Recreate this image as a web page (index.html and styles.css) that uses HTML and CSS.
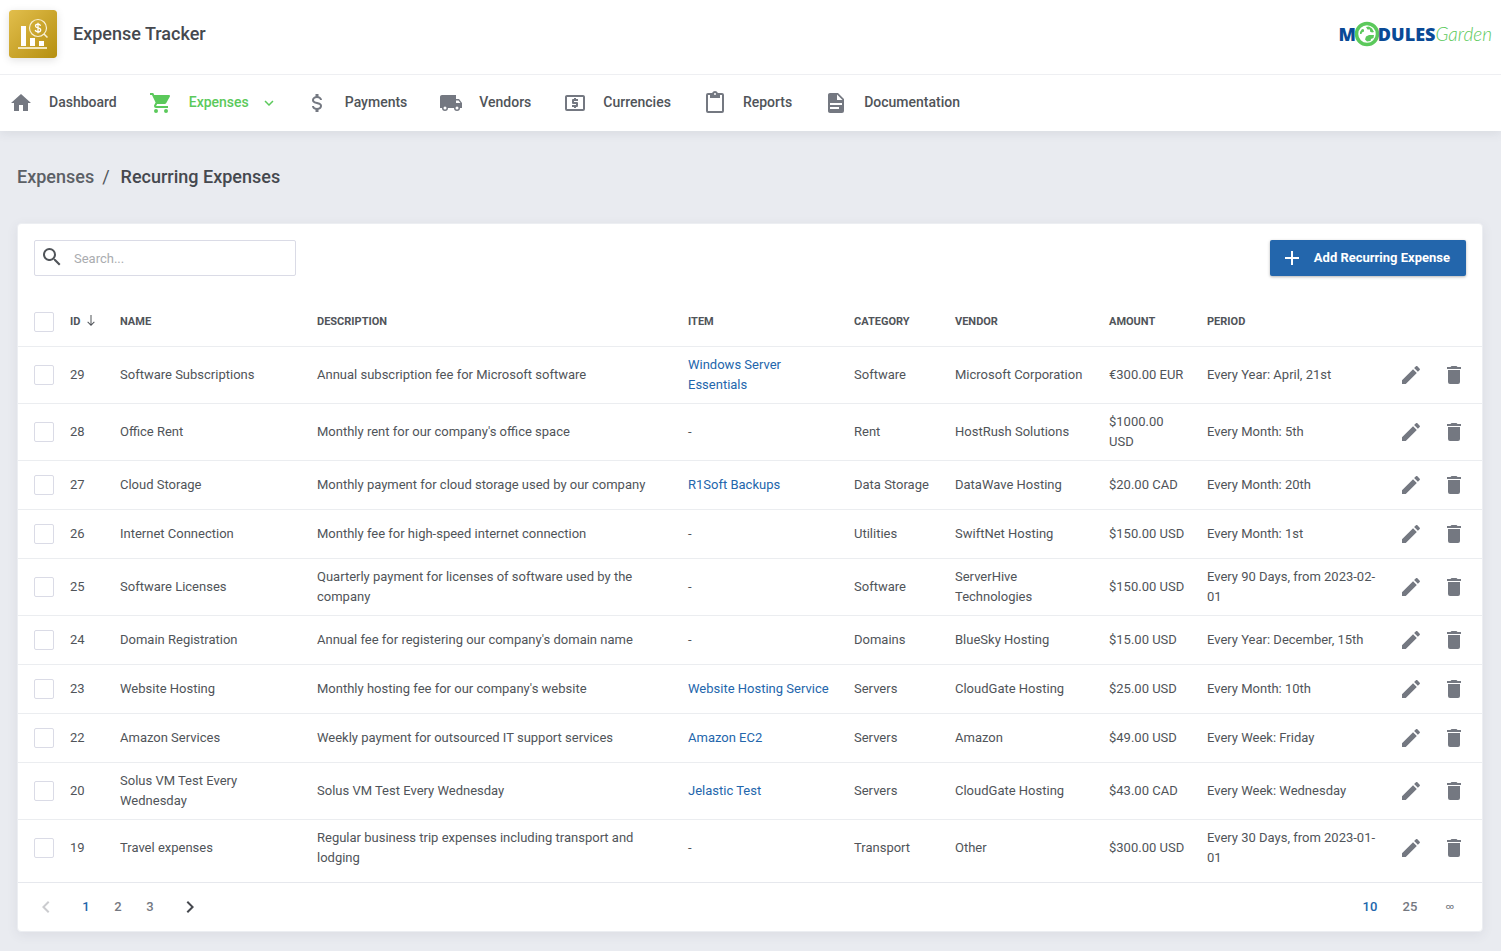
FILE: index.html
```
<!DOCTYPE html>
<html lang="en">
<head>
  <meta charset="utf-8">
  <title>Expense Tracker</title>
  <link rel="stylesheet" href="styles.css">
</head>
<body>
<svg class="sprite" aria-hidden="true">
  <symbol id="home" viewBox="0 0 24 24"><path d="M10 20V14H14V20H19V12H22L12 3L2 12H5V20H10Z"/></symbol>
  <symbol id="cart" viewBox="0 0 24 24"><path d="M17 18A2 2 0 1 1 17 22A2 2 0 1 1 17 18M1 2H4.27L5.21 4H20A1 1 0 0 1 21 5C21 5.17 20.95 5.34 20.88 5.5L17.3 11.97C16.96 12.58 16.3 13 15.55 13H8.1L7.2 14.63L7.17 14.75A.25 .25 0 0 0 7.42 15H19V17H7A2 2 0 0 1 5 15C5 14.65 5.09 14.32 5.24 14.04L6.6 11.59L3 4H1V2M7 18A2 2 0 1 1 7 22A2 2 0 1 1 7 18Z"/></symbol>
  <symbol id="usd" viewBox="0 0 24 24"><path d="M7 15H9C9 16.08 10.37 17 12 17S15 16.08 15 15C15 13.9 13.96 13.5 11.76 12.97C9.64 12.44 7 11.78 7 9C7 7.21 8.47 5.69 10.5 5.18V3H13.5V5.18C15.53 5.69 17 7.21 17 9H15C15 7.92 13.63 7 12 7S9 7.92 9 9C9 10.1 10.04 10.5 12.24 11.03C14.36 11.56 17 12.22 17 15C17 16.79 15.53 18.31 13.5 18.82V21H10.5V18.82C8.47 18.31 7 16.79 7 15Z"/></symbol>
  <symbol id="truck" viewBox="0 0 24 24"><path d="M18 18.5A1.5 1.5 0 0 0 19.5 17A1.5 1.5 0 0 0 18 15.5A1.5 1.5 0 0 0 16.5 17A1.5 1.5 0 0 0 18 18.5M19.5 9.5H17V12H21.46L19.5 9.5M6 18.5A1.5 1.5 0 0 0 7.5 17A1.5 1.5 0 0 0 6 15.5A1.5 1.5 0 0 0 4.5 17A1.5 1.5 0 0 0 6 18.5M20 8L23 12V17H21A3 3 0 0 1 15 17H9A3 3 0 0 1 3 17H1V6C1 4.89 1.89 4 3 4H17V8H20Z"/></symbol>
  <symbol id="cash" viewBox="0 0 24 24"><path d="M20 18H4V6H20M20 4H4C2.89 4 2 4.89 2 6V18A2 2 0 0 0 4 20H20A2 2 0 0 0 22 18V6C22 4.89 21.1 4 20 4M11 17H13V16H14A1 1 0 0 0 15 15V12A1 1 0 0 0 14 11H11V10H15V8H13V7H11V8H10A1 1 0 0 0 9 9V12A1 1 0 0 0 10 13H13V14H9V16H11V17Z"/></symbol>
  <symbol id="clipboard" viewBox="0 0 24 24"><path d="M19 2H14.82C14.4 .84 13.3 0 12 0S9.6 .84 9.18 2H5A2 2 0 0 0 3 4V20A2 2 0 0 0 5 22H19A2 2 0 0 0 21 20V4A2 2 0 0 0 19 2M12 2A1 1 0 1 1 12 4A1 1 0 1 1 12 2M7 4V7H17V4H19V20H5V4H7Z"/></symbol>
  <symbol id="file" viewBox="0 0 24 24"><path d="M13 9H18.5L13 3.5V9M6 2H14L20 8V20A2 2 0 0 1 18 22H6C4.89 22 4 21.1 4 20V4C4 2.89 4.89 2 6 2M15 18V16H6V18H15M18 14V12H6V14H18Z"/></symbol>
  <symbol id="search" viewBox="0 0 24 24"><path d="M9.5 3A6.5 6.5 0 0 1 16 9.5C16 11.11 15.41 12.59 14.44 13.73L14.71 14H15.5L20.5 19L19 20.5L14 15.5V14.71L13.73 14.44A6.5 6.5 0 1 1 9.5 3M9.5 5A4.5 4.5 0 1 0 9.5 14A4.5 4.5 0 1 0 9.5 5Z"/></symbol>
  <symbol id="plus" viewBox="0 0 24 24"><path d="M19 13H13V19H11V13H5V11H11V5H13V11H19V13Z"/></symbol>
  <symbol id="down" viewBox="0 0 24 24"><path d="M7.41 8.58L12 13.17L16.59 8.58L18 10L12 16L6 10L7.41 8.58Z"/></symbol>
  <symbol id="left" viewBox="0 0 24 24"><path d="M15.41 16.58L10.83 12L15.41 7.41L14 6L8 12L14 18L15.41 16.58Z"/></symbol>
  <symbol id="right" viewBox="0 0 24 24"><path d="M8.59 16.58L13.17 12L8.59 7.41L10 6L16 12L10 18L8.59 16.58Z"/></symbol>
  <symbol id="sort" viewBox="0 0 12 12"><path d="M5.5 0H6.5V9L9 6.5L9.7 7.2L6 11L2.3 7.2L3 6.5L5.5 9Z"/></symbol>
  <symbol id="pencil" viewBox="0 0 24 24"><path d="M20.71 7.04C21.1 6.65 21.1 6 20.71 5.63L18.37 3.29C18 2.9 17.35 2.9 16.96 3.29L15.12 5.12L18.87 8.87M3 17.25V21H6.75L17.81 9.93L14.06 6.18L3 17.25Z"/></symbol>
  <symbol id="trash" viewBox="0 0 24 24"><path d="M19 4H15.5L14.5 3H9.5L8.5 4H5V6H19M6 19A2 2 0 0 0 8 21H16A2 2 0 0 0 18 19V7H6V19Z"/></symbol>
</svg>

<header>
  <div class="top">
    <svg class="app-icon" viewBox="0 0 48 48">
      <defs>
        <linearGradient id="gold" x1="0" y1="0" x2="1" y2="1">
          <stop offset="0" stop-color="#e2be4c"/>
          <stop offset="1" stop-color="#b58f10"/>
        </linearGradient>
      </defs>
      <rect width="48" height="48" rx="3" fill="url(#gold)"/>
      <path d="M12 16H17V36H12ZM21 28H26V36H21ZM30 31H35V36H30Z" fill="#fff"/>
      <path d="M9 37H38V39H9Z" fill="#f3e7bd"/>
      <circle cx="29" cy="18" r="8.5" fill="none" stroke="#f8f0d5" stroke-width="1.2"/>
      <path d="M35 24L38.500 27.500" stroke="#f8f0d5" stroke-width="1.500"/>
      <path d="M31.500 15.800C31.200 14.700 30.200 14.200 29 14.200C27.500 14.200 26.500 14.900 26.500 16C26.500 18.600 31.700 17 31.700 19.900C31.700 21.100 30.500 21.800 29 21.800C27.500 21.800 26.500 21.200 26.200 20M29 12.800V23.200" fill="none" stroke="#fff" stroke-width="1.300"/>
    </svg>
    <h1>Expense Tracker</h1>
    <a class="brand" href="#" aria-label="ModulesGarden"><b>M</b><svg class="globe" viewBox="0 0 26 26">
        <circle cx="13" cy="13" r="10.500" fill="#fff" stroke="#5bc95b" stroke-width="3.500"/>
        <path d="M6 11L8 8L10 8.500L10 10.500L8 11.500L7.500 13L6 13ZM12 6L15 5.500L18 7.500L20 11L18 11.500L16 10.500L16 8.500L13.500 8.500ZM11 18.500L12 15.500L15 14L20 14L19.500 17L17 18L16.500 20L13 20.500Z" fill="#5bc95b"/>
      </svg><b>DULES</b><i>Garden</i></a>
  </div>
  <nav>
    <a href="#"><svg><use href="#home"/></svg>Dashboard</a>
    <a href="#" class="active"><svg><use href="#cart"/></svg>Expenses<svg class="caret"><use href="#down"/></svg></a>
    <a href="#"><svg><use href="#usd"/></svg>Payments</a>
    <a href="#"><svg><use href="#truck"/></svg>Vendors</a>
    <a href="#"><svg><use href="#cash"/></svg>Currencies</a>
    <a href="#"><svg><use href="#clipboard"/></svg>Reports</a>
    <a href="#"><svg><use href="#file"/></svg>Documentation</a>
  </nav>
</header>

<main>
  <div class="breadcrumb"><a href="#">Expenses</a><span>/</span><h2>Recurring Expenses</h2></div>

  <div class="card">
    <div class="toolbar">
      <label class="search">
        <svg><use href="#search"/></svg>
        <input type="text" placeholder="Search..." aria-label="Search">
      </label>
      <button class="add" type="button"><svg><use href="#plus"/></svg>Add Recurring Expense</button>
    </div>

    <table>
      <colgroup>
        <col class="c-check"><col class="c-id"><col class="c-name"><col><col class="c-item">
        <col class="c-category"><col class="c-vendor"><col class="c-amount"><col class="c-period"><col class="c-actions">
      </colgroup>
      <thead>
        <tr>
          <th><input type="checkbox" aria-label="Select all"></th>
          <th>ID<svg class="sort"><use href="#sort"/></svg></th>
          <th>NAME</th>
          <th>DESCRIPTION</th>
          <th>ITEM</th>
          <th>CATEGORY</th>
          <th>VENDOR</th>
          <th>AMOUNT</th>
          <th>PERIOD</th>
          <th></th>
        </tr>
      </thead>
      <tbody>
        <tr>
          <td><input type="checkbox" aria-label="Select 29"></td>
          <td>29</td>
          <td>Software Subscriptions</td>
          <td>Annual subscription fee for Microsoft software</td>
          <td><a href="#">Windows Server Essentials</a></td>
          <td>Software</td>
          <td>Microsoft Corporation</td>
          <td>€300.00 EUR</td>
          <td>Every Year: April, 21st</td>
          <td><div class="actions"><button type="button" aria-label="Edit"><svg><use href="#pencil"/></svg></button><button type="button" aria-label="Delete"><svg><use href="#trash"/></svg></button></div></td>
        </tr>
        <tr>
          <td><input type="checkbox" aria-label="Select 28"></td>
          <td>28</td>
          <td>Office Rent</td>
          <td>Monthly rent for our company's office space</td>
          <td>-</td>
          <td>Rent</td>
          <td>HostRush Solutions</td>
          <td>$1000.00 USD</td>
          <td>Every Month: 5th</td>
          <td><div class="actions"><button type="button" aria-label="Edit"><svg><use href="#pencil"/></svg></button><button type="button" aria-label="Delete"><svg><use href="#trash"/></svg></button></div></td>
        </tr>
        <tr>
          <td><input type="checkbox" aria-label="Select 27"></td>
          <td>27</td>
          <td>Cloud Storage</td>
          <td>Monthly payment for cloud storage used by our company</td>
          <td><a href="#">R1Soft Backups</a></td>
          <td>Data Storage</td>
          <td>DataWave Hosting</td>
          <td>$20.00 CAD</td>
          <td>Every Month: 20th</td>
          <td><div class="actions"><button type="button" aria-label="Edit"><svg><use href="#pencil"/></svg></button><button type="button" aria-label="Delete"><svg><use href="#trash"/></svg></button></div></td>
        </tr>
        <tr>
          <td><input type="checkbox" aria-label="Select 26"></td>
          <td>26</td>
          <td>Internet Connection</td>
          <td>Monthly fee for high-speed internet connection</td>
          <td>-</td>
          <td>Utilities</td>
          <td>SwiftNet Hosting</td>
          <td>$150.00 USD</td>
          <td>Every Month: 1st</td>
          <td><div class="actions"><button type="button" aria-label="Edit"><svg><use href="#pencil"/></svg></button><button type="button" aria-label="Delete"><svg><use href="#trash"/></svg></button></div></td>
        </tr>
        <tr>
          <td><input type="checkbox" aria-label="Select 25"></td>
          <td>25</td>
          <td>Software Licenses</td>
          <td>Quarterly payment for licenses of software used by the company</td>
          <td>-</td>
          <td>Software</td>
          <td>ServerHive Technologies</td>
          <td>$150.00 USD</td>
          <td>Every 90 Days, from 2023-02-01</td>
          <td><div class="actions"><button type="button" aria-label="Edit"><svg><use href="#pencil"/></svg></button><button type="button" aria-label="Delete"><svg><use href="#trash"/></svg></button></div></td>
        </tr>
        <tr>
          <td><input type="checkbox" aria-label="Select 24"></td>
          <td>24</td>
          <td>Domain Registration</td>
          <td>Annual fee for registering our company's domain name</td>
          <td>-</td>
          <td>Domains</td>
          <td>BlueSky Hosting</td>
          <td>$15.00 USD</td>
          <td>Every Year: December, 15th</td>
          <td><div class="actions"><button type="button" aria-label="Edit"><svg><use href="#pencil"/></svg></button><button type="button" aria-label="Delete"><svg><use href="#trash"/></svg></button></div></td>
        </tr>
        <tr>
          <td><input type="checkbox" aria-label="Select 23"></td>
          <td>23</td>
          <td>Website Hosting</td>
          <td>Monthly hosting fee for our company's website</td>
          <td><a href="#">Website Hosting Service</a></td>
          <td>Servers</td>
          <td>CloudGate Hosting</td>
          <td>$25.00 USD</td>
          <td>Every Month: 10th</td>
          <td><div class="actions"><button type="button" aria-label="Edit"><svg><use href="#pencil"/></svg></button><button type="button" aria-label="Delete"><svg><use href="#trash"/></svg></button></div></td>
        </tr>
        <tr>
          <td><input type="checkbox" aria-label="Select 22"></td>
          <td>22</td>
          <td>Amazon Services</td>
          <td>Weekly payment for outsourced IT support services</td>
          <td><a href="#">Amazon EC2</a></td>
          <td>Servers</td>
          <td>Amazon</td>
          <td>$49.00 USD</td>
          <td>Every Week: Friday</td>
          <td><div class="actions"><button type="button" aria-label="Edit"><svg><use href="#pencil"/></svg></button><button type="button" aria-label="Delete"><svg><use href="#trash"/></svg></button></div></td>
        </tr>
        <tr>
          <td><input type="checkbox" aria-label="Select 20"></td>
          <td>20</td>
          <td>Solus VM Test Every Wednesday</td>
          <td>Solus VM Test Every Wednesday</td>
          <td><a href="#">Jelastic Test</a></td>
          <td>Servers</td>
          <td>CloudGate Hosting</td>
          <td>$43.00 CAD</td>
          <td>Every Week: Wednesday</td>
          <td><div class="actions"><button type="button" aria-label="Edit"><svg><use href="#pencil"/></svg></button><button type="button" aria-label="Delete"><svg><use href="#trash"/></svg></button></div></td>
        </tr>
        <tr>
          <td><input type="checkbox" aria-label="Select 19"></td>
          <td>19</td>
          <td>Travel expenses</td>
          <td>Regular business trip expenses including transport and lodging</td>
          <td>-</td>
          <td>Transport</td>
          <td>Other</td>
          <td>$300.00 USD</td>
          <td>Every 30 Days, from 2023-01-01</td>
          <td><div class="actions"><button type="button" aria-label="Edit"><svg><use href="#pencil"/></svg></button><button type="button" aria-label="Delete"><svg><use href="#trash"/></svg></button></div></td>
        </tr>
      </tbody>
    </table>

    <div class="footer">
      <div class="pages">
        <button type="button" class="prev" aria-label="Previous" disabled><svg><use href="#left"/></svg></button>
        <button type="button" class="current">1</button>
        <button type="button">2</button>
        <button type="button">3</button>
        <button type="button" class="next" aria-label="Next"><svg><use href="#right"/></svg></button>
      </div>
      <div class="sizes">
        <button type="button" class="current">10</button>
        <button type="button">25</button>
        <button type="button" class="all">∞</button>
      </div>
    </div>
  </div>
</main>
</body>
</html>
```
FILE: styles.css
```
* {
  box-sizing: border-box;
}
body {
  margin: 0;
  background: #e9ebf0;
  color: #505459;
  font-family: Roboto, sans-serif;
  font-size: 13px;
  line-height: 20px;
}
svg {
  display: block;
  width: 24px;
  height: 24px;
  fill: currentColor;
  flex: none;
}
.sprite {
  display: none;
}
a {
  color: #2366ac;
  text-decoration: none;
}
button {
  border: none;
  background: none;
  padding: 0;
  font: inherit;
  color: inherit;
  cursor: pointer;
}

/* header */
header {
  background: #fff;
  box-shadow: 0 2px 10px rgba(60, 65, 90, 0.1);
}
.top {
  display: flex;
  align-items: center;
  height: 75px;
  padding: 0 9px 6px;
  border-bottom: 1px solid #eeeff2;
}
.app-icon {
  width: 48px;
  height: 48px;
  border-radius: 3px;
  box-shadow: 0 2px 8px rgba(0, 0, 0, 0.12);
}
h1 {
  margin: 0 0 0 16px;
  font-size: 18px;
  font-weight: 500;
  color: #45484e;
}
.brand {
  display: flex;
  align-items: center;
  margin-left: auto;
  font-family: "Open Sans", sans-serif;
  font-size: 18px;
  color: #0a4a96;
}
.brand b {
  font-weight: 800;
}
.brand i {
  font-family: Lato, sans-serif;
  font-size: 19px;
  font-weight: 300;
  color: #5bc95b;
}
.globe {
  width: 26px;
  height: 26px;
  margin: 0 -2px;
}
nav {
  display: flex;
  gap: 32px;
  height: 56px;
  padding: 0 9px 2px;
}
nav a {
  display: flex;
  align-items: center;
  gap: 16px;
  font-size: 14px;
  font-weight: 500;
  color: #505459;
}
nav svg {
  margin-top: 2px;
  color: #747881;
}
nav .active, nav .active svg {
  color: #5bc95b;
}
nav .caret {
  width: 18px;
  height: 18px;
  margin: 2px -5px 0 -5px;
}

main {
  padding: 34px 18px 18px 17px;
}
.breadcrumb {
  display: flex;
  align-items: center;
  height: 24px;
  margin-bottom: 34px;
  font-size: 18px;
}
.breadcrumb a {
  font-weight: 500;
  color: #5c6066;
}
.breadcrumb span {
  margin: 0 11px 0 8px;
}
h2 {
  margin: 0;
  font-size: 18px;
  font-weight: 500;
  color: #45484e;
}

.card {
  background: #fff;
  border: 1px solid #eceef2;
  border-radius: 4px;
  box-shadow: 0 3px 12px rgba(60, 65, 90, 0.08);
}
.toolbar {
  display: flex;
  justify-content: space-between;
  padding: 16px 16px 20px;
}
.search {
  display: flex;
  align-items: center;
  width: 262px;
  height: 36px;
  padding-left: 5px;
  border: 1px solid #dadbe6;
  border-radius: 2px;
}
.search svg {
  margin-bottom: 2px;
}
.search input {
  flex: 1;
  min-width: 0;
  margin-left: 10px;
  padding: 2px 0 0;
  border: none;
  outline: none;
  font: inherit;
}
.search input::placeholder {
  color: #aaacb0;
}
.add {
  display: flex;
  align-items: center;
  gap: 10px;
  height: 36px;
  padding: 0 16px 0 10px;
  border-radius: 2px;
  background: #2366ac;
  box-shadow: 0 1px 3px rgba(0, 0, 0, 0.3);
  color: #fff;
  font-weight: 700;
}

/* table */
table {
  width: 100%;
  table-layout: fixed;
  border-collapse: separate;
  border-spacing: 0;
  margin-bottom: 6px;
}
.c-check { width: 40px; }
.c-id { width: 50px; }
.c-name { width: 197px; }
.c-item { width: 166px; }
.c-category { width: 101px; }
.c-vendor { width: 154px; }
.c-amount { width: 98px; }
.c-period { width: 196px; }
.c-actions { width: 91px; }
th {
  height: 51px;
  padding: 2px 0 0 12px;
  border-bottom: 1px solid #ebedf0;
  font-size: 11px;
  font-weight: 700;
  text-align: left;
  white-space: nowrap;
}
td {
  height: 49px;
  padding: 8px 10px 8px 12px;
  border-bottom: 1px solid #ebedf0;
}
tr:last-child td {
  border-bottom: none;
}
th:first-child {
  padding: 2px 0 0 16px;
}
td:first-child {
  padding: 0 0 0 16px;
}
td:last-child {
  padding: 0 16px 0 0;
}
thead tr:last-child th {
  border-bottom: 1px solid #ebedf0;
}
input[type="checkbox"] {
  display: block;
  appearance: none;
  width: 20px;
  height: 20px;
  margin: 0;
  border: 1px solid #dadbe6;
  border-radius: 2px;
  background: #fff;
}
.sort {
  display: inline-block;
  width: 12px;
  height: 12px;
  margin-left: 5px;
  vertical-align: -2px;
}
.actions {
  display: flex;
  justify-content: flex-end;
  gap: 19px;
  color: #747881;
}

/* pagination */
.footer {
  display: flex;
  justify-content: space-between;
  padding: 8px 16px 8px 12px;
  border-top: 1px solid #e6e8ed;
}
.footer button {
  width: 32px;
  height: 32px;
  font-weight: 500;
  color: #747881;
}
.footer .current {
  color: #2366ac;
}
.footer svg {
  margin: auto;
}
.pages, .sizes {
  display: flex;
}
.sizes {
  gap: 8px;
}
.sizes .all {
  font-size: 8px;
}
.footer .prev {
  margin-right: 8px;
  color: #cbcccf;
}
.footer .next {
  margin-left: 8px;
  color: #45484e;
}
```
